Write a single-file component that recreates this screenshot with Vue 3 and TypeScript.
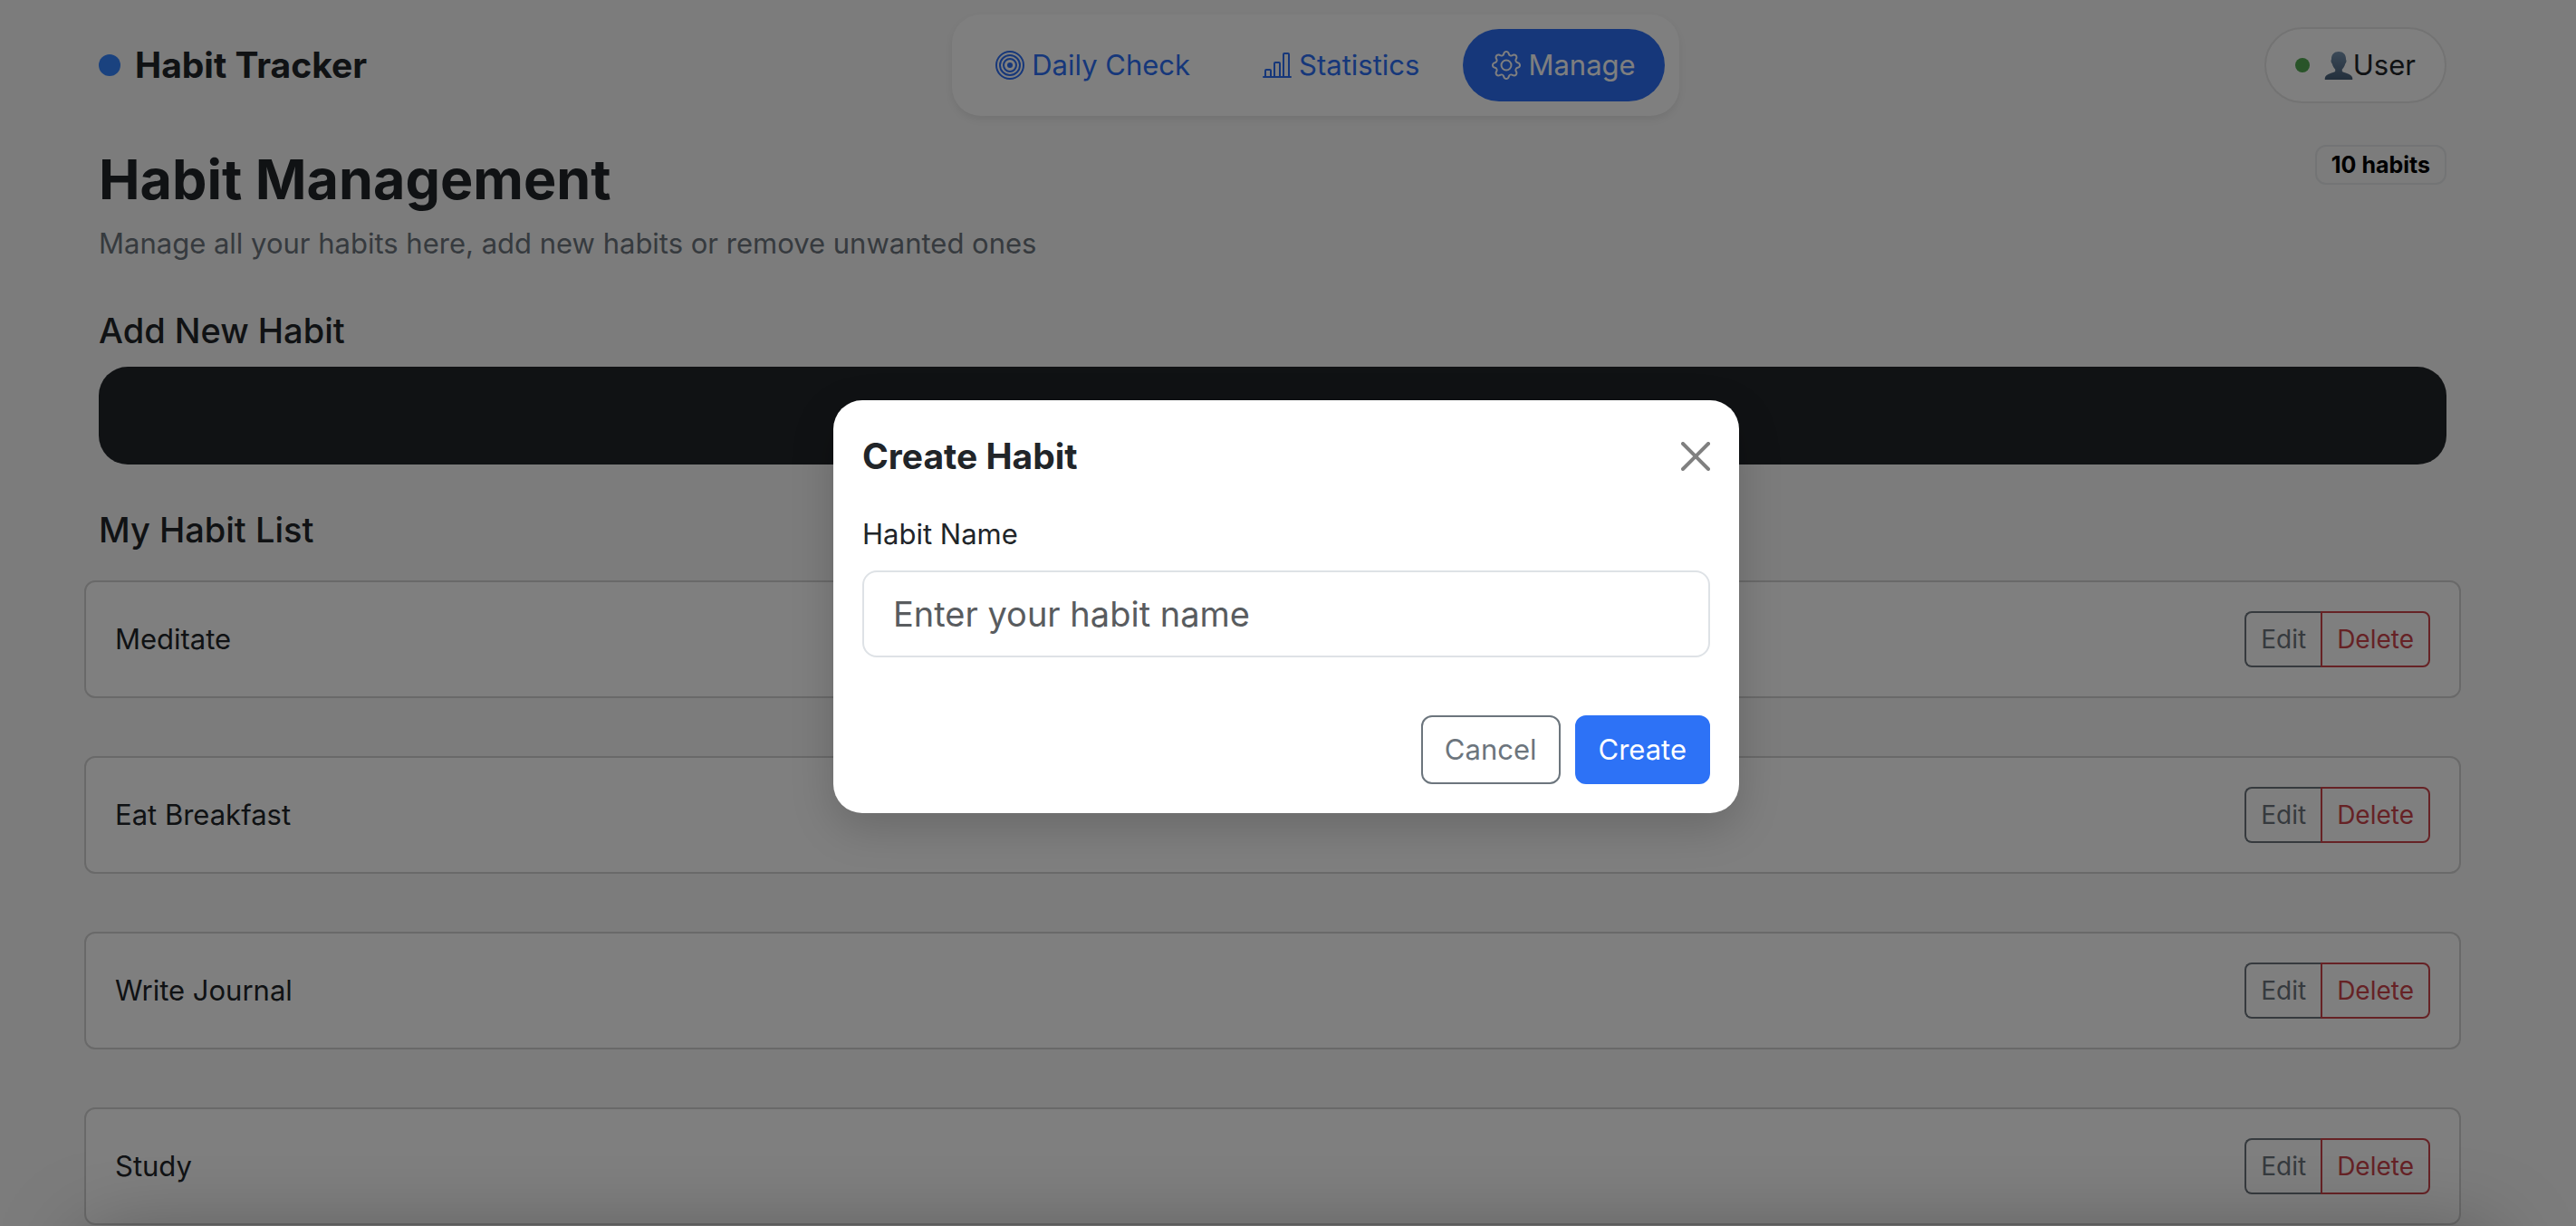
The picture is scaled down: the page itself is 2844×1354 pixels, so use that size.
<script setup lang="ts">
import { ref } from 'vue'

interface Habit {
  id: number
  name: string
}

const habits: Habit[] = [
  { id: 1, name: 'Meditate' },
  { id: 2, name: 'Eat Breakfast' },
  { id: 3, name: 'Write Journal' },
  { id: 4, name: 'Study' },
]

const total = 10
const habitName = ref('')
</script>

<template>
  <div class="app">
    <header class="topbar">
      <a class="brand" href="#"><span class="brand-dot"></span>Habit Tracker</a>

      <nav class="tabs">
        <a class="tab" href="#daily">
          <svg class="icon" viewBox="0 0 16 16" fill="none" stroke="currentColor" aria-hidden="true">
            <circle cx="8" cy="8" r="7.5" />
            <circle cx="8" cy="8" r="5.5" />
            <circle cx="8" cy="8" r="3.5" />
            <circle cx="8" cy="8" r="1.5" fill="currentColor" stroke="none" />
          </svg>
          Daily Check
        </a>
        <a class="tab" href="#statistics">
          <svg class="icon" viewBox="0 0 16 16" fill="currentColor" aria-hidden="true">
            <path d="M11 2a1 1 0 0 1 1-1h2a1 1 0 0 1 1 1v12h.5a.5.5 0 0 1 0 1H.5a.5.5 0 0 1 0-1H1v-3a1 1 0 0 1 1-1h2a1 1 0 0 1 1 1v3h1V7a1 1 0 0 1 1-1h2a1 1 0 0 1 1 1v7h1zm1 12h2V2h-2zm-3 0V7H7v7zm-5 0v-3H2v3z" />
          </svg>
          Statistics
        </a>
        <a class="tab active" href="#manage">
          <svg class="icon" viewBox="0 0 16 16" fill="currentColor" aria-hidden="true">
            <path d="M8 4.754a3.246 3.246 0 1 0 0 6.492 3.246 3.246 0 0 0 0-6.492M5.754 8a2.246 2.246 0 1 1 4.492 0 2.246 2.246 0 0 1-4.492 0" />
            <path d="M9.796 1.343c-.527-1.79-3.065-1.79-3.592 0l-.094.319a.873.873 0 0 1-1.255.52l-.292-.16c-1.64-.892-3.433.902-2.54 2.541l.159.292a.873.873 0 0 1-.52 1.255l-.319.094c-1.79.527-1.79 3.065 0 3.592l.319.094a.873.873 0 0 1 .52 1.255l-.16.292c-.892 1.64.901 3.434 2.541 2.54l.292-.159a.873.873 0 0 1 1.255.52l.094.319c.527 1.79 3.065 1.79 3.592 0l.094-.319a.873.873 0 0 1 1.255-.52l.292.16c1.64.893 3.434-.902 2.54-2.541l-.159-.292a.873.873 0 0 1 .52-1.255l.319-.094c1.79-.527 1.79-3.065 0-3.592l-.319-.094a.873.873 0 0 1-.52-1.255l.16-.292c.893-1.64-.902-3.433-2.541-2.54l-.292.159a.873.873 0 0 1-1.255-.52zm-2.633.283c.246-.835 1.428-.835 1.674 0l.094.319a1.873 1.873 0 0 0 2.693 1.115l.291-.16c.764-.415 1.6.42 1.184 1.185l-.159.292a1.873 1.873 0 0 0 1.116 2.692l.318.094c.835.246.835 1.428 0 1.674l-.319.094a1.873 1.873 0 0 0-1.115 2.693l.16.291c.415.764-.42 1.6-1.185 1.184l-.291-.159a1.873 1.873 0 0 0-2.693 1.116l-.094.318c-.246.835-1.428.835-1.674 0l-.094-.319a1.873 1.873 0 0 0-2.692-1.115l-.292.16c-.764.415-1.6-.42-1.184-1.185l.159-.291A1.873 1.873 0 0 0 1.945 8.93l-.319-.094c-.835-.246-.835-1.428 0-1.674l.319-.094A1.873 1.873 0 0 0 3.06 4.377l-.16-.292c-.415-.764.42-1.6 1.185-1.184l.292.159a1.873 1.873 0 0 0 2.692-1.115z" />
          </svg>
          Manage
        </a>
      </nav>

      <button class="user" type="button">
        <span class="status-dot"></span>
        <svg class="icon" viewBox="0 0 32 32" aria-hidden="true">
          <defs>
            <linearGradient id="bust" x1="0" y1="0" x2="0" y2="1">
              <stop offset="0" stop-color="#7894b0" />
              <stop offset="1" stop-color="#465e78" />
            </linearGradient>
          </defs>
          <path fill="url(#bust)" d="M16 1c-5 0-8 3-8 8 0 1-.6 1.500-.5 2.500.1 1.500.8 2.300 1.300 3 .6 2.500 1.700 4.400 3.400 5.900v2.300C10.500 25 2 24.500.8 30c-.1.700 0 1.500 0 2h30.400c0-.5.1-1.300 0-2-1.200-5.500-9.700-5-11.400-7.300v-2.300c1.700-1.500 2.800-3.400 3.400-5.900.5-.7 1.200-1.500 1.300-3 .1-1-.5-1.500-.5-2.500 0-5-3-8-8-8z" />
        </svg>User
      </button>
    </header>

    <main class="content">
      <div class="page-head">
        <div>
          <h1>Habit Management</h1>
          <p class="lead">Manage all your habits here, add new habits or remove unwanted ones</p>
        </div>
        <span class="badge">{{ total }} habits</span>
      </div>

      <section>
        <h2>Add New Habit</h2>
        <button class="add" type="button" aria-label="Add new habit"></button>
      </section>

      <section>
        <h2>My Habit List</h2>
        <ul class="habits">
          <li v-for="habit in habits" :key="habit.id" class="habit">
            <span>{{ habit.name }}</span>
            <div class="actions">
              <button class="edit" type="button">Edit</button>
              <button class="delete" type="button">Delete</button>
            </div>
          </li>
        </ul>
      </section>
    </main>

    <div class="sheet"></div>

    <div class="backdrop">
      <form class="modal" role="dialog" aria-labelledby="modal-title" @submit.prevent>
        <div class="modal-head">
          <h3 id="modal-title">Create Habit</h3>
          <button class="close" type="button" aria-label="Close">
            <svg class="icon" viewBox="0 0 16 16" fill="currentColor" aria-hidden="true">
              <path d="M.293.293a1 1 0 0 1 1.414 0L8 6.586 14.293.293a1 1 0 1 1 1.414 1.414L9.414 8l6.293 6.293a1 1 0 0 1-1.414 1.414L8 9.414l-6.293 6.293a1 1 0 0 1-1.414-1.414L6.586 8 .293 1.707a1 1 0 0 1 0-1.414" />
            </svg>
          </button>
        </div>
        <label for="habit-name">Habit Name</label>
        <input id="habit-name" v-model="habitName" type="text" placeholder="Enter your habit name" />
        <div class="modal-foot">
          <button class="cancel" type="button">Cancel</button>
          <button class="create" type="submit">Create</button>
        </div>
      </form>
    </div>
  </div>
</template>

<style>
body {
  margin: 0;
}
</style>

<style scoped>
.app,
.app * {
  box-sizing: border-box;
}

.app {
  position: relative;
  height: 100vh;
  overflow: hidden;
  padding-right: 34px;
  background: #f8f8f8;
  color: #212529;
  font-family: Inter, "Liberation Sans", sans-serif;
  font-size: 31px;
  line-height: 48px;
}

button,
input {
  font: inherit;
}

h1,
h2,
h3,
p {
  margin: 0;
}

.icon {
  flex: none;
  width: 32px;
  height: 32px;
}

.topbar,
.content {
  max-width: 2640px;
  margin: 0 auto;
  padding: 16px 24px;
}

.topbar {
  display: flex;
  align-items: center;
  justify-content: space-between;
}

.brand {
  display: flex;
  align-items: center;
  gap: 16px;
  color: inherit;
  font-size: 39px;
  font-weight: 700;
  text-decoration: none;
}

.brand-dot {
  width: 24px;
  height: 24px;
  border-radius: 50%;
  background: #3584ff;
}

.tabs {
  display: flex;
  gap: 16px;
  padding: 16px;
  border-radius: 32px;
  background: #fff;
  box-shadow: 0 4px 8px rgba(0, 0, 0, 0.075);
}

.tab {
  display: flex;
  align-items: center;
  gap: 8px;
  padding: 16px 32px;
  border-radius: 40px;
  color: #2d6ff5;
  text-decoration: none;
}

.tab.active {
  background: #2d6ff5;
  color: #fff;
}

.user {
  display: flex;
  align-items: center;
  padding: 16px 32px;
  border: 2px solid #e6e6e6;
  border-radius: 42px;
  background: #fff;
  color: inherit;
}

.status-dot {
  width: 16px;
  height: 16px;
  margin-right: 16px;
  border-radius: 50%;
  background: #52a852;
}

.page-head {
  display: flex;
  align-items: flex-start;
  justify-content: space-between;
}

h1 {
  margin-bottom: 8px;
  font-size: 61px;
  font-weight: 700;
  line-height: 77px;
}

.lead {
  color: #6c757d;
}

.badge {
  padding: 8px 16px;
  border: 2px solid #e6e8ea;
  border-radius: 12px;
  color: #000;
  font-size: 25px;
  font-weight: 700;
  line-height: 24px;
}

section {
  margin-top: 48px;
}

h2 {
  font-size: 38px;
  font-weight: 500;
}

.add {
  display: block;
  width: 100%;
  height: 108px;
  margin-top: 16px;
  border: 0;
  border-radius: 32px;
  background: #212529;
}

.habits {
  display: flex;
  flex-direction: column;
  gap: 64px;
  margin: 32px -16px 0;
  padding: 0;
  list-style: none;
}

.habit {
  display: flex;
  align-items: center;
  justify-content: space-between;
  padding: 32px;
  border: 2px solid #d2d2d2;
  border-radius: 12px;
  background: #fff;
}

.actions {
  display: flex;
  font-size: 28px;
  line-height: 42px;
}

.actions button {
  padding: 8px 16px;
  border: 2px solid currentColor;
  background: none;
}

.actions .edit {
  border-right: 0;
  border-radius: 8px 0 0 8px;
  color: #6c757d;
}

.actions .delete {
  border-radius: 0 8px 8px 0;
  color: #cc444b;
}

/* Panel parked under the window's lower edge; only its shadow reaches the page. */
.sheet {
  position: absolute;
  top: 100%;
  right: 96px;
  left: 96px;
  height: 200px;
  box-shadow: 0 16px 96px rgba(0, 0, 0, 0.35);
}

.backdrop {
  position: absolute;
  inset: 0;
  display: grid;
  place-items: center;
  padding: 0 4px 14px 0;
  background: rgba(0, 0, 0, 0.5);
}

.modal {
  display: flex;
  flex-direction: column;
  width: 1000px;
  max-width: 100%;
  padding: 32px;
  border-radius: 32px;
  background: #fff;
  box-shadow: 0 16px 48px rgba(0, 0, 0, 0.175);
}

.modal-head {
  display: flex;
  align-items: center;
  justify-content: space-between;
  margin-bottom: 32px;
}

h3 {
  font-size: 39px;
  font-weight: 700;
  line-height: 60px;
}

.close {
  display: flex;
  padding: 0;
  border: 0;
  background: none;
  color: #808080;
}

label {
  margin-bottom: 16px;
}

input {
  width: 100%;
  padding: 16px 32px;
  border: 2px solid #dee2e6;
  border-radius: 16px;
  background: #fff;
  color: inherit;
  font-size: 38px;
  line-height: 60px;
}

input::placeholder {
  color: #595c5f;
  opacity: 1;
}

.modal-foot {
  display: flex;
  justify-content: flex-end;
  gap: 16px;
  margin-top: 64px;
}

.modal-foot button {
  padding: 12px 24px;
  border: 2px solid #6c757d;
  border-radius: 12px;
  background: #fff;
  color: #6c757d;
}

.modal-foot .create {
  border-color: #2d72f6;
  background: #2d72f6;
  color: #fff;
}
</style>
